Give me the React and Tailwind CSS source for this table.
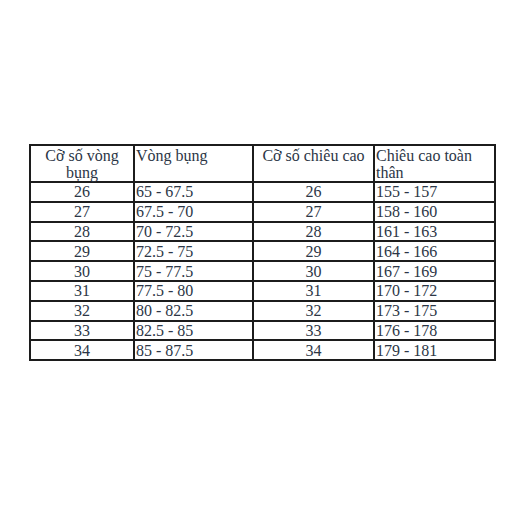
import React from "react";

const rows = [
  ["26", "65 - 67.5", "26", "155 - 157"],
  ["27", "67.5 - 70", "27", "158 - 160"],
  ["28", "70 - 72.5", "28", "161 - 163"],
  ["29", "72.5 - 75", "29", "164 - 166"],
  ["30", "75 - 77.5", "30", "167 - 169"],
  ["31", "77.5 - 80", "31", "170 - 172"],
  ["32", "80 - 82.5", "32", "173 - 175"],
  ["33", "82.5 - 85", "33", "176 - 178"],
  ["34", "85 - 87.5", "34", "179 - 181"],
];

const cell = "border-2 border-[#1c1c1c] p-0 font-[family-name:'Liberation_Serif',serif] text-[16px] text-[#2c3646] font-normal";

export default function App() {
  return (
    <div className="w-[508px] h-[508px] bg-white pt-[144px] pl-[29px]">
      <table className="border-collapse table-fixed w-[465px] font-[family-name:'Liberation_Serif',serif] text-[16px]">
        <colgroup>
          <col className="w-[104px]" />
          <col className="w-[119px]" />
          <col className="w-[121px]" />
          <col className="w-[121px]" />
        </colgroup>
        <thead>
          <tr className="h-[36px]">
            <th className={cell + " align-top text-center leading-[17px] pt-[1px]"}>Cỡ số vòng<br />bụng</th>
            <th className={cell + " align-top text-left leading-[17px] pt-[1px] pl-[1px]"}>Vòng bụng</th>
            <th className={cell + " align-top text-center leading-[17px] pt-[1px]"}>Cỡ số chiêu cao</th>
            <th className={cell + " align-top text-left leading-[17px] pt-[1px] pl-[1px]"}>Chiêu cao toàn<br />thân</th>
          </tr>
        </thead>
        <tbody>
          {rows.map((r, i) => (
            <tr key={i} className="h-[19.8px]">
              <td className={cell + " text-center leading-[17px]"}>{r[0]}</td>
              <td className={cell + " text-left leading-[17px] pl-[1px]"}>{r[1]}</td>
              <td className={cell + " text-center leading-[17px]"}>{r[2]}</td>
              <td className={cell + " text-left leading-[17px] pl-[1px]"}>{r[3]}</td>
            </tr>
          ))}
        </tbody>
      </table>
    </div>
  );
}
